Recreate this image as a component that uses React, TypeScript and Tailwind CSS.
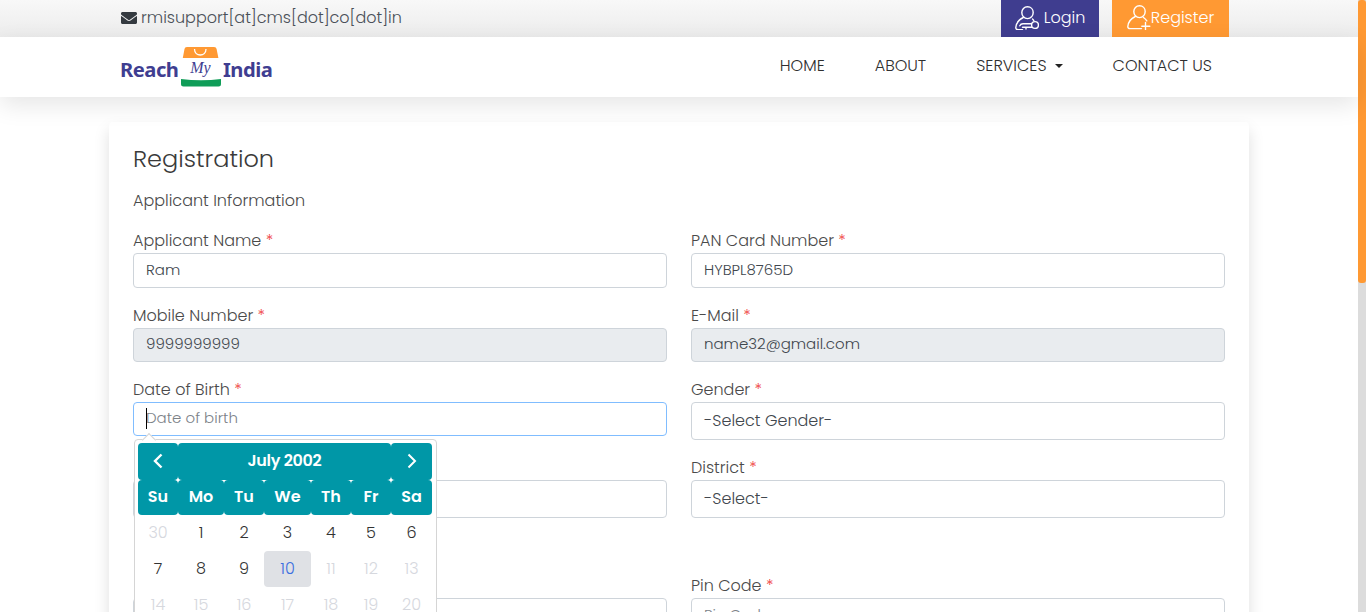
import { FaEnvelope } from 'react-icons/fa';

const font = "font-['Poppins','Inter','Noto_Sans',sans-serif]";

function Field({ label, value, placeholder, disabled, focus, select }: {
  label?: string;
  value?: string;
  placeholder?: string;
  disabled?: boolean;
  focus?: boolean;
  select?: boolean;
}) {
  const height = select ? 'h-[38px]' : disabled || focus ? 'h-[34px] pb-[2px]' : 'h-[35px]';
  const border = focus ? 'border-[#80bdff]' : 'border-[#ced4da]';
  const bg = disabled ? 'bg-[#e9ecef]' : 'bg-white';
  const size = select ? 'text-[16px]' : 'text-[15px]';
  return (
    <div className="mb-4">
      {/* the labels under the date picker are covered, so they stay blank */}
      <label className="block h-6 text-[16px] leading-6 text-[#4a4a4a]">
        {label && <>{label} <span className="text-[#ef4444]">*</span></>}
      </label>
      <div className={`relative ${height} ${border} ${bg} ${size} border rounded-[4px] px-3 flex items-center text-[#41474e] overflow-hidden`}>
        {focus && <span className="absolute left-3 top-[5px] w-px h-[21px] bg-black" />}
        {placeholder ? <span className="text-[#7c8288]">{placeholder}</span> : value}
      </div>
    </div>
  );
}

function LoginIcon() {
  return (
    <svg width="24" height="24" viewBox="0 0 24 24" fill="none" stroke="white" strokeWidth="1.4" strokeLinecap="round">
      <path d="M12.5 0.8 C15.8 0.8 18.2 3.3 18.2 6.6 C18.2 9.8 15.8 12.6 12.5 12.6 C9.2 12.6 6.8 9.8 6.8 6.6 C6.8 3.3 9.2 0.8 12.5 0.8 Z" />
      <path d="M8.3 11.5 C4 13.5 1.2 17.5 0.8 21.5 C0.7 23 1.8 23.6 3 23.6 L7.5 23.6" />
      <path d="M4.8 19.8 C5.4 18.4 6.6 17.8 8 17.8 L16.5 17.8" />
      <path d="M17.5 13 C18 13.5 18.5 14 18.8 14.6" />
      <circle cx="20" cy="19" r="3.4" />
      <path d="M7.5 21.2 L16.6 21.2 M11 21.2 L11 23" />
    </svg>
  );
}

function RegisterIcon() {
  return (
    <svg width="24" height="25" viewBox="0 0 24 25" fill="none" stroke="white" strokeWidth="1.4" strokeLinecap="round">
      <path d="M12.5 0.8 C15.8 0.8 18.2 3.3 18.2 6.6 C18.2 9.8 15.8 12.6 12.5 12.6 C9.2 12.6 6.8 9.8 6.8 6.6 C6.8 3.3 9.2 0.8 12.5 0.8 Z" />
      <path d="M8.3 11.5 C4 13.5 1.2 17.5 0.8 21.5 C0.7 23 1.8 23.6 3 23.6 L14.5 23.6" />
      <path d="M16.5 12.5 C18 13.5 19 14.5 19.8 15.8" />
      <path d="M18.5 17.5 L18.5 24.8 M14.8 21.2 L22.8 21.2" />
    </svg>
  );
}

function Logo() {
  return (
    <div className="flex items-center h-10 -ml-px font-['Noto_Sans',sans-serif] font-bold text-[#3f3e91] text-[20.2px] leading-none">
      <span className="w-[61px] tracking-[-0.5px] mt-[4px]">Reach</span>
      <svg width="40" height="40" viewBox="0 0 40 40">
        <path d="M3.5 2 Q3.7 0 6 0 L33 0 Q35.3 0 35.6 2 L37.4 11 L1.8 11 Z" fill="#ff9933" />
        <path d="M13.5 2 C13.5 10 25 10 25 2" fill="none" stroke="white" strokeWidth="1.3" />
        <path d="M0 32 Q20 34.5 40 32 L40 37 Q40 39.5 37.5 39.5 L2.5 39.5 Q0 39.5 0 37 Z" fill="#0f9d58" />
        <text x="19.5" y="26" textAnchor="middle" fontFamily="Liberation Serif" fontStyle="italic" fontSize="16" fontWeight="400" fill="#3f3e91">My</text>
      </svg>
      <span className="ml-[2px] tracking-[-0.5px] mt-[4px]">India</span>
    </div>
  );
}

const days = [
  ['30', '1', '2', '3', '4', '5', '6'],
  ['7', '8', '9', '10', '11', '12', '13'],
  ['14', '15', '16', '17', '18', '19', '20'],
];

function DatePicker() {
  return (
    <div className="absolute z-10 left-px top-[61px] w-[303px] h-[300px] bg-white border border-[#d5d5d5] rounded-[4px] p-[3px]">
      <div className="absolute -top-[5px] left-[9px] w-[10px] h-[10px] bg-white border-l border-t border-[#d5d5d5] rotate-45" />
      <div className="relative grid grid-cols-[40px_46px_40px_47px_40px_40px_41px] text-[16px] text-center">
        <div className="h-[37px] pb-[2px] bg-[#0097a7] rounded-[4px] flex items-center justify-center">
          <svg width="12" height="16" viewBox="0 0 12 16" fill="none" stroke="white" strokeWidth="2.4"><path d="M9.5 1.5 L3 8 L9.5 14.5" /></svg>
        </div>
        <div className="col-span-5 h-[37px] pb-[2px] bg-[#0097a7] rounded-[4px] text-white font-semibold flex items-center justify-center tracking-[-0.3px]">July 2002</div>
        <div className="h-[37px] pb-[2px] bg-[#0097a7] rounded-[4px] flex items-center justify-center">
          <svg width="12" height="16" viewBox="0 0 12 16" fill="none" stroke="white" strokeWidth="2"><path d="M2.5 1.5 L9 8 L2.5 14.5" /></svg>
        </div>
        {['Su', 'Mo', 'Tu', 'We', 'Th', 'Fr', 'Sa'].map(d => (
          <div key={d} className="h-[35px] pb-[2px] bg-[#0097a7] rounded-[4px] text-white font-semibold flex items-center justify-center">{d}</div>
        ))}
        {days.flat().map((d, i) => {
          const muted = i === 0 || i > 10;
          const active = d === '10';
          return (
            <div
              key={d}
              className={`h-[36px] rounded-[4px] flex items-center justify-center text-[16px] font-light ${muted ? 'text-[#d6d8de]' : active ? 'bg-[#dfe1e5] text-[#3b6ee0]' : 'text-[#333]'}`}
            >
              {d}
            </div>
          );
        })}
      </div>
    </div>
  );
}

export default function App() {
  return (
    <div className={`${font} font-light flex h-[612px] w-[1366px] overflow-hidden bg-white`}>
      <div className="w-[1358px] shrink-0">
        {/* top bar */}
        <div className="h-[37px] bg-gradient-to-b from-[#f8f8f8] to-[#ececec]">
          <div className="w-[1140px] mx-auto pl-3 pr-5 flex items-center justify-between h-full">
            <div className="flex items-center gap-[4px] pb-[2px] text-[16px] text-[#4a5058]">
              <FaEnvelope size={16} className="text-[#343a40]" />
              <span>rmisupport[at]cms[dot]co[dot]in</span>
            </div>
            <div className="flex gap-[13px] h-full">
              <a className="w-[98px] pb-[2px] bg-[#3f3d8f] text-white flex items-center justify-center gap-[5px] text-[16px]">
                <LoginIcon />
                Login
              </a>
              <a className="w-[117px] pb-[2px] bg-[#ff9933] text-white flex items-center justify-center text-[16px]">
                <RegisterIcon />
                Register
              </a>
            </div>
          </div>
        </div>

        {/* nav */}
        <div className="relative h-[60px] bg-white shadow-[0_8px_24px_rgba(0,0,0,0.1)]">
          <div className="w-[1140px] mx-auto pl-3 flex items-center justify-between h-full">
            <Logo />
            <nav className="flex items-center gap-[50px] pr-[37px] mb-0.5 text-[16px] text-[#2f2f2f]">
              <a>HOME</a>
              <a>ABOUT</a>
              <a className="flex items-center gap-[8px]">
                SERVICES
                <span className="w-0 h-0 border-x-[4px] border-x-transparent border-t-[4px] border-t-[#222]" />
              </a>
              <a>CONTACT US</a>
            </nav>
          </div>
        </div>

        {/* form card */}
        <div className="w-[1140px] mx-auto mt-[25px] bg-white rounded-[4px] shadow-[0_8px_16px_rgba(0,0,0,0.13)] px-6 pt-[20px] pb-10">
          <h2 className="text-[24px] leading-[33px] text-[#3a3a3a]">Registration</h2>
          <p className="text-[16px] leading-6 mt-[14px] text-[#4a4a4a]">Applicant Information</p>

          <div className="grid grid-cols-2 gap-x-6 mt-4">
            <Field label="Applicant Name" value="Ram" />
            <Field label="PAN Card Number" value="HYBPL8765D" />
            <Field label="Mobile Number" value="9999999999" disabled />
            <Field label="E-Mail" value="name32@gmail.com" disabled />
            <div className="relative">
              <Field label="Date of Birth" placeholder="Date of birth" focus />
              <DatePicker />
            </div>
            <Field label="Gender" value="-Select Gender-" select />
            <Field select />
            <Field label="District" value="-Select-" select />
          </div>

          <div className="h-10" />

          <div className="grid grid-cols-2 gap-x-6">
            <Field />
            <Field label="Pin Code" placeholder="Pin Code" />
          </div>
        </div>
      </div>

      {/* scrollbar */}
      <div className="w-2 h-full bg-[#dcdcdc]">
        <div className="h-[283px] bg-[#ff9933] rounded-[3px]" />
      </div>
    </div>
  );
}
